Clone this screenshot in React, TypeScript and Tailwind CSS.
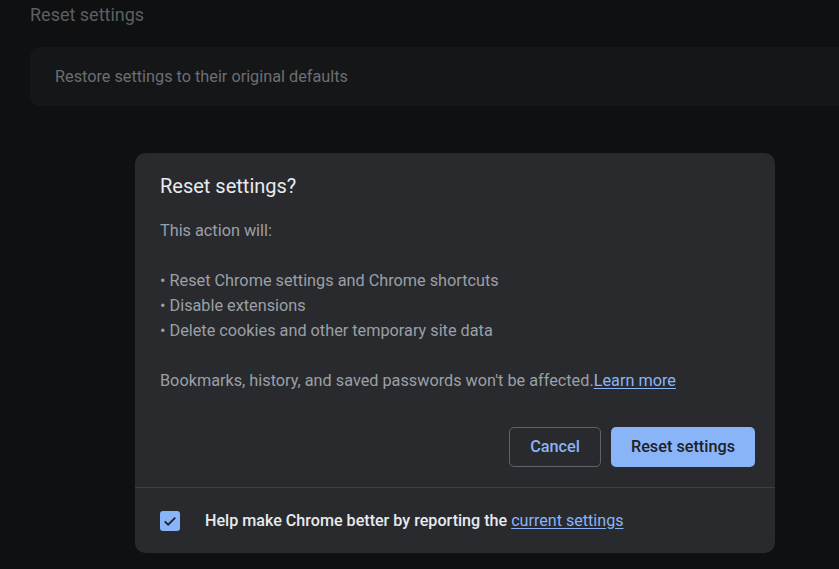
export default function App() {
  return (
    <div
      className="relative w-[839px] h-[569px] overflow-hidden bg-[#0f1011]"
      style={{ fontFamily: 'Roboto, "Liberation Sans", sans-serif' }}
    >
      <div className="px-[30px]">
        <h2 className="h-[30px] leading-[30px] text-[18px] text-[#5d5f62]">Reset settings</h2>
        <div className="mt-[17px] mr-[-40px] h-[59px] rounded-[10px] bg-[#151618] flex items-center pt-[2px] pl-[25px] text-[16.25px] text-[#6c6e72]">
          Restore settings to their original defaults
        </div>
      </div>

      <div className="absolute left-[135px] top-[153px] w-[640px] h-[400px] rounded-[10px] bg-[#292a2d] flex flex-col">
        <div className="flex-1 pl-[25px] pr-[20px]">
          <h1 className="pt-[20px] h-[46px] leading-[26px] text-[20px] text-[#e8eaed]">Reset settings?</h1>
          <div className="mt-[19px] text-[16.25px] leading-[25px] text-[#9aa0a6]">
            <p>This action will:</p>
            <p>&nbsp;</p>
            <p>• Reset Chrome settings and Chrome shortcuts</p>
            <p>• Disable extensions</p>
            <p>• Delete cookies and other temporary site data</p>
            <p>&nbsp;</p>
            <p>
              Bookmarks, history, and saved passwords won't be affected.
              <a className="text-[#8ab4f8] underline underline-offset-2">Learn more</a>
            </p>
          </div>
          <div className="mt-[34px] flex justify-end gap-[10px]">
            <button className="h-[40px] w-[92px] rounded-[5px] border border-[#5f6368] text-[16.25px] font-medium text-[#8ab4f8]">
              Cancel
            </button>
            <button className="h-[40px] w-[144px] rounded-[5px] bg-[#8ab4f8] text-[16.25px] font-medium text-[#202124]">
              Reset settings
            </button>
          </div>
        </div>
        <div className="h-[66px] border-t border-[#3c4043] flex items-center px-[25px] pt-[1px]">
          <div className="w-[20px] h-[20px] rounded-[3px] bg-[#8ab4f8] flex items-center justify-center">
            <svg width="18" height="18" viewBox="0 0 24 24" fill="none" stroke="#202124" strokeWidth="2.4">
              <path d="M5 12.5l4.5 4.5L19 7.5" />
            </svg>
          </div>
          <p className="ml-[25px] text-[16.12px] font-medium text-[#e8eaed]">
            Help make Chrome better by reporting the{' '}
            <a className="font-normal text-[#8ab4f8] underline underline-offset-2">current settings</a>
          </p>
        </div>
      </div>
    </div>
  );
}
